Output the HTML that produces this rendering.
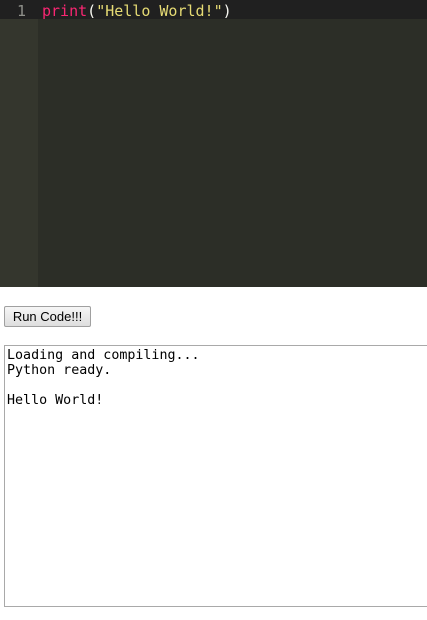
<!DOCTYPE html>
<html><head><style>
body{margin:0;background:#fff;width:427px;height:620px;overflow:hidden;font-family:"Liberation Sans",sans-serif}
#ed{position:absolute;left:0;top:0;width:427px;height:287px;background:#2c2e27}
#gut{position:absolute;left:0;top:0;width:38px;height:287px;background:#34362d}
#act{position:absolute;left:0;top:0;width:427px;height:19px;background:#202020}
#ln{position:absolute;left:0;top:2px;width:26px;text-align:right;color:#8f908a;font:15px/19px "DejaVu Sans Mono",monospace}
#code{position:absolute;left:42px;top:2px;font:15px/19px "DejaVu Sans Mono",monospace;color:#f8f8f2;white-space:pre}
.k{color:#f92672}.s{color:#e6db74}
#btn{position:absolute;left:4px;top:306px;width:87px;height:21px;border:1px solid #a0a0a0;border-radius:2px;background:linear-gradient(#f6f6f6,#dedede);font:13px "Liberation Sans",sans-serif;color:#000;padding:0;text-align:center;line-height:19px;box-sizing:border-box}
#out{position:absolute;left:4px;top:345px;width:430px;height:262px;border:1px solid #a9a9a9;box-sizing:border-box;font:13.33px/15px "DejaVu Sans Mono",monospace;color:#000;padding:2px 2px;white-space:pre}
</style></head><body>
<div id="ed"><div id="gut"></div><div id="act"></div><div id="ln">1</div>
<div id="code"><span class="k">print</span>(<span class="s">"Hello World!"</span>)</div></div>
<div id="btn">Run Code!!!</div>
<div id="out">Loading and compiling...
Python ready.

Hello World!</div>
</body></html>
